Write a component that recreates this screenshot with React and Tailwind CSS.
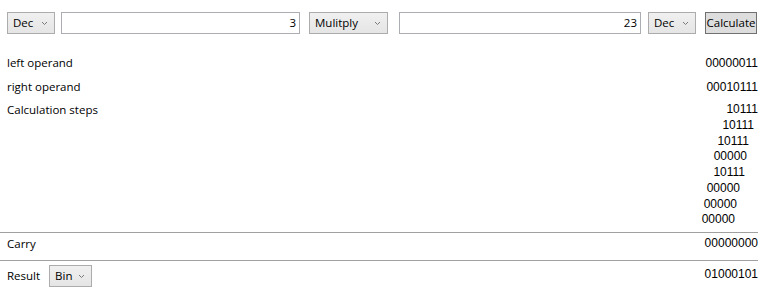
import React from 'react';

const ui = { fontFamily: '"Open Sans", "Noto Sans", sans-serif' };
const num = { fontFamily: '"Liberation Sans", Arial, sans-serif' };

function Chevron() {
    return (
        <svg width="7" height="5" viewBox="0 0 7 5" className="shrink-0">
            <polyline points="1,1 3.5,3.5 6,1" fill="none" stroke="#7a7a7a" strokeWidth="1" />
        </svg>
    );
}

function Combo({ label, className }) {
    return (
        <div className={`flex items-center justify-between h-[22px] pl-[5px] pr-[6px] border border-[#acacac] bg-gradient-to-b from-[#f0f0f0] to-[#e5e5e5] text-[11.5px] text-black ${className}`}>
            <span>{label}</span>
            <Chevron />
        </div>
    );
}

function NumBox({ value, className }) {
    return (
        <div className={`flex items-center justify-end h-[22px] pr-[3px] border border-[#abadb3] bg-white text-[11.5px] text-black ${className}`}>
            {value}
        </div>
    );
}

const steps = [
    { v: '10111', mr: 'mr-[0px]' },
    { v: '10111', mr: 'mr-[4px]' },
    { v: '10111', mr: 'mr-[9px]' },
    { v: '00000', mr: 'mr-[11px]' },
    { v: '10111', mr: 'mr-[13px]' },
    { v: '00000', mr: 'mr-[18px]' },
    { v: '00000', mr: 'mr-[21px]' },
    { v: '00000', mr: 'mr-[23px]' },
];

export default function App() {
    return (
        <div className="w-[768px] h-[296px] bg-white overflow-hidden text-black" style={ui}>
            {/* toolbar */}
            <div className="flex items-center pl-[7px] pt-[12px]">
                <Combo label="Dec" className="w-[48px]" />
                <NumBox value="3" className="w-[239px] ml-[6px]" />
                <Combo label="Mulitply" className="w-[79px] ml-[9px]" />
                <NumBox value="23" className="w-[242px] ml-[11px]" />
                <Combo label="Dec" className="w-[48px] ml-[7px]" />
                <div className="flex items-center justify-center h-[22px] w-[52px] ml-[9px] border border-[#707070] bg-[#dddddd] text-[11.5px]">
                    Calculate
                </div>
            </div>

            <div className="w-[758px] mt-[17px]">
                <div className="flex items-center justify-between h-[24px] pl-[7px]">
                    <span className="text-[11.5px]">left operand</span>
                    <span className="text-[12px] leading-[16px]" style={num}>00000011</span>
                </div>
                <div className="flex items-center justify-between h-[24px] pl-[7px]">
                    <span className="text-[11.5px]">right operand</span>
                    <span className="text-[12px] leading-[16px]" style={num}>00010111</span>
                </div>
                <div className="flex justify-between pl-[7px] pt-[3px] pb-[4px]">
                    <span className="text-[11.5px] leading-[16px]">Calculation steps</span>
                    <div className="flex flex-col items-end text-[12px] leading-[15.75px]" style={num}>
                        {steps.map((s, i) => (
                            <span key={i} className={s.mr}>{s.v}</span>
                        ))}
                    </div>
                </div>
                <div className="h-px bg-[#a0a0a0]" />
                <div className="flex justify-between pl-[7px] pt-[2px] pb-[8px]">
                    <span className="text-[11.5px] leading-[16px] pt-[1px]">Carry</span>
                    <span className="text-[12px] leading-[16px]" style={num}>00000000</span>
                </div>
                <div className="h-px bg-[#a0a0a0]" />
                <div className="flex justify-between items-start pl-[7px] pt-[4px]">
                    <div className="flex items-center">
                        <span className="text-[11.5px]">Result</span>
                        <Combo label="Bin" className="w-[43px] ml-[9px]" />
                    </div>
                    <span className="text-[12px] leading-[16px] pt-px" style={num}>01000101</span>
                </div>
            </div>
        </div>
    );
}
